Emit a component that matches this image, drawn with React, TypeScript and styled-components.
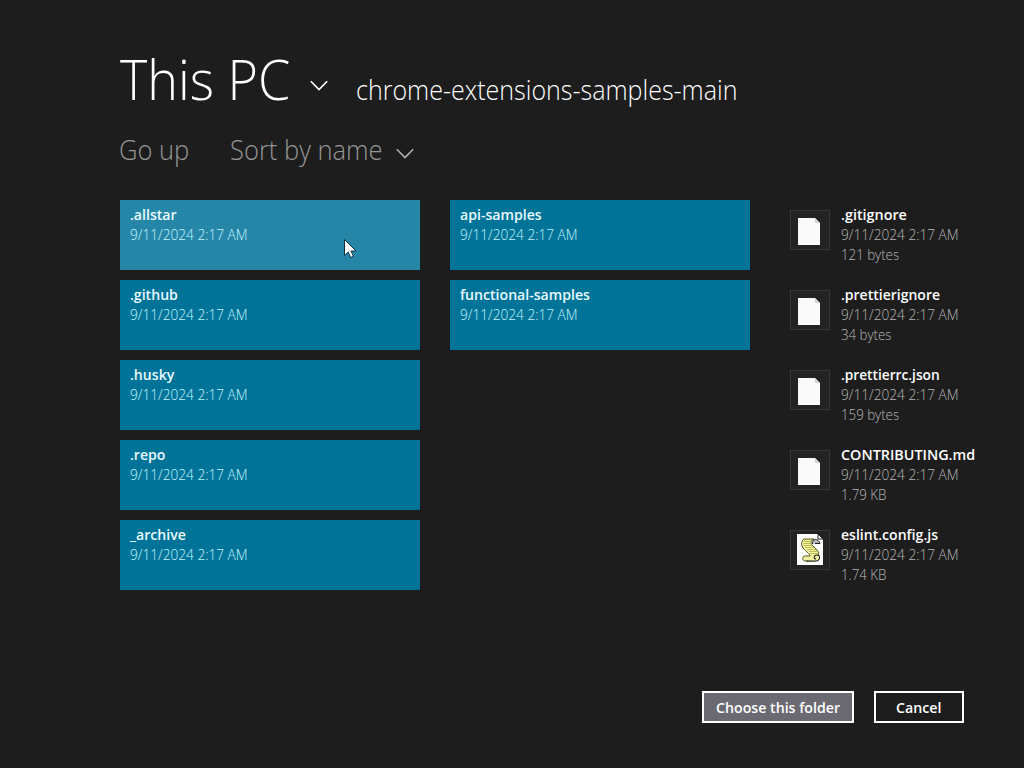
import React from "react";
import styled, { createGlobalStyle } from "styled-components";

const GlobalStyle = createGlobalStyle`
  * { box-sizing: border-box; }
  body {
    margin: 0;
    background: #1d1d1d;
    color: #fff;
    font-family: "Open Sans", "Noto Sans", sans-serif;
    overflow: hidden;
  }
`;

const Picker = styled.main`
  width: 1024px;
  height: 768px;
  padding: 48px 0 45px 120px;
  display: flex;
  flex-direction: column;
  cursor: default;
`;

const Header = styled.header`
  display: flex;
  align-items: baseline;
  height: 60px;
`;

const HeaderChevron = styled.div`
  align-self: flex-start;
  padding-top: 32px;
  margin-left: -0.5px;
`;

const Condensed = styled.span<{ $ratio: number }>`
  display: block;
  width: max-content;
  white-space: pre;
  transform: scaleX(${(p) => p.$ratio});
  transform-origin: 0 50%;
`;

const Title = styled.h1`
  margin: 0;
  width: 190px;
  font-size: 56px;
  line-height: 60px;
  font-weight: 300;
`;

const Subtitle = styled.h2`
  margin: 0 0 0 28.5px;
  font-size: 27px;
  line-height: 36px;
  font-weight: 300;
`;

const Chevron = styled.svg`
  display: block;
  flex: none;
  width: 18px;
  height: 12px;
  fill: none;
  stroke: currentColor;
  stroke-width: 1.6;
`;

const Commands = styled.nav`
  display: flex;
  align-items: center;
  margin: 24px 0 0 -1px;
  height: 36px;
  color: #969696;
`;

const Command = styled.div<{ $width: number }>`
  width: ${(p) => p.$width}px;
  font-size: 27px;
  line-height: 36px;
  font-weight: 300;
`;

const SortChevron = styled.div`
  padding: 7px 0 0 0.5px;
  color: #b0b0b0;
`;

const Items = styled.section`
  margin-top: 32px;
  display: grid;
  grid-template-columns: 300px 300px 244px;
  column-gap: 30px;
`;

const Column = styled.div`
  display: flex;
  flex-direction: column;
  gap: 10px;
`;

const Folder = styled.article<{ $hover?: boolean }>`
  position: relative;
  height: 70px;
  padding: 4px 10px;
  background: ${(p) => (p.$hover ? "#2586a8" : "#007399")};
  color: #e9fbff;
`;

const File = styled.article`
  height: 70px;
  padding: 4px 10px;
  display: flex;
  gap: 11px;
`;

const Thumb = styled.div`
  margin-top: 6px;
  width: 40px;
  height: 40px;
  border: 1px solid #363636;
  background: #232323;
  display: flex;
  align-items: center;
  justify-content: center;
`;

const Glyph = styled.svg`
  display: block;
  width: 38px;
  height: 38px;
`;

const Name = styled.div`
  font-size: 15px;
  line-height: 20px;
  font-weight: 600;
`;

const Meta = styled.div<{ $tone: "tile" | "file" }>`
  font-size: 15px;
  line-height: 20px;
  font-weight: 300;
  color: ${(p) => (p.$tone === "tile" ? "#c6f5ff" : "#b8b8b8")};
`;

const Pointer = styled.svg`
  position: absolute;
  left: 223px;
  top: 38px;
  width: 14px;
  height: 22px;
`;

const Footer = styled.footer`
  margin-top: auto;
  padding-right: 60px;
  display: flex;
  justify-content: flex-end;
  gap: 20px;
`;

const Button = styled.button<{ $primary?: boolean }>`
  width: ${(p) => (p.$primary ? 152 : 90)}px;
  height: 32px;
  padding: 0 0 0 ${(p) => (p.$primary ? 11.5 : 20)}px;
  border: 2px solid #fff;
  background: ${(p) => (p.$primary ? "#6b6a72" : "#1d1d1d")};
  color: #fff;
  font: 600 15px/20px "Open Sans", "Noto Sans", sans-serif;
  text-align: left;
`;

const DATE = "9/11/2024 2:17 AM";

const folders = [
  [".allstar", ".github", ".husky", ".repo", "_archive"],
  ["api-samples", "functional-samples"],
];

const files = [
  { name: ".gitignore", size: "121 bytes", ratio: 0.957 },
  { name: ".prettierignore", size: "34 bytes", ratio: 0.934 },
  { name: ".prettierrc.json", size: "159 bytes", ratio: 0.914 },
  { name: "CONTRIBUTING.md", size: "1.79 KB", ratio: 0.957 },
  { name: "eslint.config.js", size: "1.74 KB", ratio: 0.937, script: true },
];

const Down = () => (
  <Chevron viewBox="0 0 18 12">
    <path d="M.8 1.2 9 9.6l8.2-8.4" />
  </Chevron>
);

const PageIcon = () => (
  <Glyph viewBox="0 0 38 38">
    <path d="M7 7h17l5 5v22H7z" fill="#fafafa" />
    <path d="M24 7v5h5z" fill="#d4d4d4" />
  </Glyph>
);

const ScriptIcon = () => (
  <Glyph viewBox="0 0 38 38">
    <path d="M6 3h21l5 5v26H6z" fill="#fff" />
    <path d="M27 3v5h5z" fill="#fff" stroke="#222" strokeWidth="1" />
    <path d="M13 8h10c-3 1-4 4-2 6l5 5c2 2 2 5 1 7l-2 4H14c-3 0-3-5 0-5h5c0-3-6-5-8-10-1-3 0-6 2-7z" fill="#f1f2a0" stroke="#56581e" strokeWidth="1" />
    <path d="M21.500 13c-1-6 6-6 7.500-.5H24" fill="#b4b4ba" stroke="#222" strokeWidth="1" />
    <path d="M13 10.500h7M12.500 12.500h7M13 14.500h8M14 16.500h9M16 18.500h9M18 20.500h8M19 22.500h8" stroke="#b0b13e" strokeWidth="0.800" />
    <path d="M15 30h10c4 0 5-6 1-6-3 0-4 4-1 4" fill="#f1f2a0" stroke="#222" strokeWidth="1.100" />
  </Glyph>
);

const Cursor = () => (
  <Pointer viewBox="0 0 14 22">
    <path d="M1.500 1.500v16l3.700-3.500 2.500 5.500 2.700-1.200-2.400-5.300h5z" fill="#fff" stroke="#12303c" strokeWidth="1" />
  </Pointer>
);

export default function App() {
  return (
    <>
      <GlobalStyle />
      <Picker>
        <Header>
          <Title><Condensed $ratio={0.93}>This PC</Condensed></Title>
          <HeaderChevron><Down /></HeaderChevron>
          <Subtitle><Condensed $ratio={0.927}>chrome-extensions-samples-main</Condensed></Subtitle>
        </Header>
        <Commands>
          <Command $width={111}><Condensed $ratio={0.945}>Go up</Condensed></Command>
          <Command $width={165}><Condensed $ratio={0.945}>Sort by name</Condensed></Command>
          <SortChevron><Down /></SortChevron>
        </Commands>
        <Items>
          {folders.map((column, i) => (
            <Column key={i}>
              {column.map((name) => (
                <Folder key={name} $hover={name === ".allstar"}>
                  <Name><Condensed $ratio={0.94}>{name}</Condensed></Name>
                  <Meta $tone="tile"><Condensed $ratio={0.91}>{DATE}</Condensed></Meta>
                  {name === ".allstar" && <Cursor />}
                </Folder>
              ))}
            </Column>
          ))}
          <Column>
            {files.map((file) => (
              <File key={file.name}>
                <Thumb>{file.script ? <ScriptIcon /> : <PageIcon />}</Thumb>
                <div>
                  <Name><Condensed $ratio={file.ratio}>{file.name}</Condensed></Name>
                  <Meta $tone="file"><Condensed $ratio={0.91}>{DATE}</Condensed></Meta>
                  <Meta $tone="file"><Condensed $ratio={0.885}>{file.size}</Condensed></Meta>
                </div>
              </File>
            ))}
          </Column>
        </Items>
        <Footer>
          <Button $primary><Condensed $ratio={0.945}>Choose this folder</Condensed></Button>
          <Button><Condensed $ratio={0.945}>Cancel</Condensed></Button>
        </Footer>
      </Picker>
    </>
  );
}
